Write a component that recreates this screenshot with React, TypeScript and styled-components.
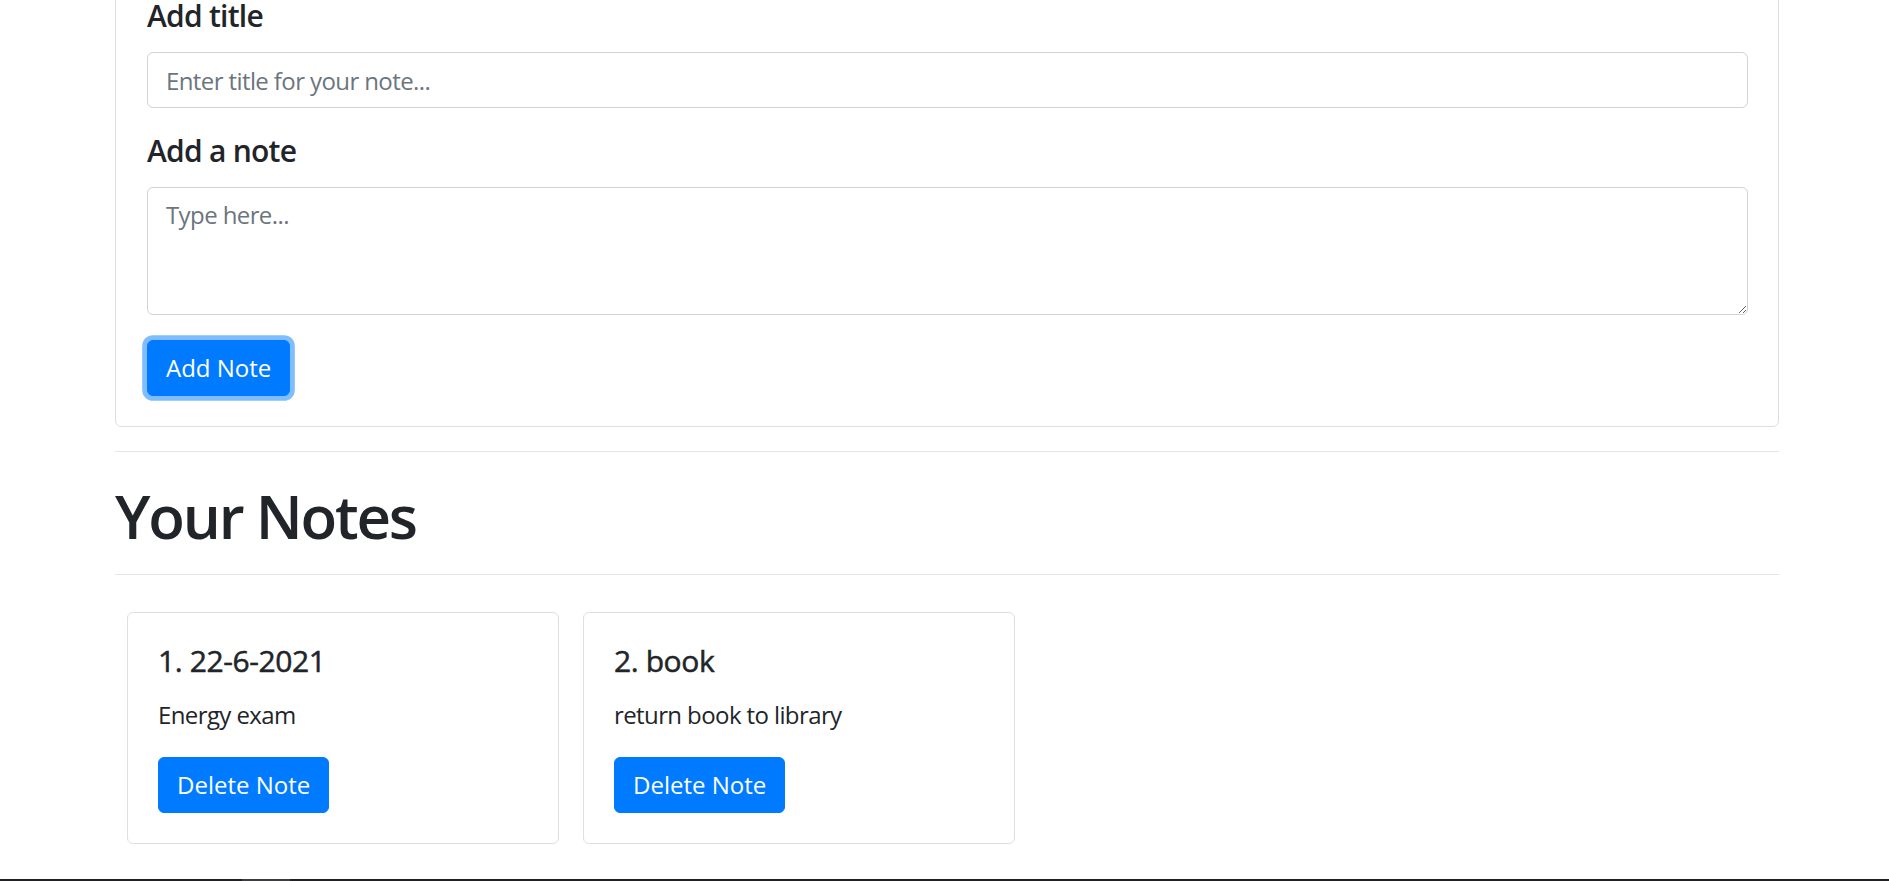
import React from "react";
import styled, { createGlobalStyle } from "styled-components";

const GlobalStyle = createGlobalStyle`
  html, body {
    margin: 0;
    padding: 0;
    background: #ffffff;
  }
  body {
    font-family: "Open Sans", "Noto Sans", "Liberation Sans", sans-serif;
    color: #212529;
    font-size: 24px;
    line-height: 1.5;
  }
  * { box-sizing: border-box; }
`;

const Screen = styled.div`
  height: 100vh;
  display: flex;
  flex-direction: column;
  overflow: hidden;
`;

const Viewport = styled.div`
  flex: 1;
  overflow: hidden;
`;

const Container = styled.div`
  width: 1664px;
  margin-left: 115px;
`;

const FormCard = styled.form`
  margin-top: -31px;
  border: 1px solid #dfdfdf;
  border-radius: 6px;
  padding: 30px 30px 30px 31px;
  display: flex;
  flex-direction: column;
  align-items: flex-start;
`;

const FormGroup = styled.div<{ $space: number }>`
  width: 100%;
  margin-bottom: ${(p) => p.$space}px;
  display: flex;
  flex-direction: column;
`;

const Label = styled.label`
  font-size: 30px;
  font-weight: 600;
  letter-spacing: -0.75px;
  line-height: 32px;
  margin-bottom: 20px;
`;

const fieldCss = `
  width: 100%;
  font-family: inherit;
  font-size: 24px;
  line-height: 36px;
  color: #495057;
  padding: 9px 18px;
  border: 1px solid #ced4da;
  border-radius: 6px;
  background: #fff;
  outline: none;
  &::placeholder { color: #6c757d; opacity: 1; letter-spacing: -0.6px; }
`;

const Input = styled.input`
  ${fieldCss}
  height: 56px;
`;

const TextArea = styled.textarea`
  ${fieldCss}
  height: 128px;
  resize: vertical;
  display: block;
`;

const Button = styled.button<{ $focused?: boolean }>`
  font-family: inherit;
  font-size: 24px;
  line-height: 36px;
  color: #fff;
  background: #007bff;
  border: 1px solid #007bff;
  border-radius: 6px;
  padding: 9px 18px;
  cursor: pointer;
  box-shadow: ${(p) => (p.$focused ? "0 0 0 4.8px rgba(0, 123, 255, 0.5)" : "none")};
`;

const Rule = styled.hr`
  border: 0;
  border-top: 1px solid rgba(0, 0, 0, 0.1);
  margin: 24px 0;
`;

const Heading = styled.h1`
  font-size: 60px;
  font-weight: 600;
  letter-spacing: -2.2px;
  line-height: 68px;
  padding-top: 6px;
  margin: 0;
`;

const NotesRow = styled.div`
  display: flex;
  flex-wrap: wrap;
`;

const NoteCard = styled.div`
  width: 432px;
  margin: 13px 12px 12px;
  border: 1px solid #dfdfdf;
  border-radius: 6px;
  padding: 30px;
`;

const NoteTitle = styled.h5`
  font-size: 30px;
  font-weight: 400;
  -webkit-text-stroke: 0.5px currentColor;
  letter-spacing: -0.4px;
  line-height: 36px;
  margin: 0 0 18px;
`;

const NoteText = styled.p`
  margin: 0 0 24px;
  font-size: 24px;
  letter-spacing: -0.6px;
  line-height: 36px;
`;

const Taskbar = styled.div`
  height: 2px;
  flex-shrink: 0;
  background: #202124;
  display: flex;
`;

const TaskbarItem = styled.div`
  width: 48px;
  margin-left: 242px;
  background: #3c3d40;
`;

const notes = [
  { title: "22-6-2021", text: "Energy exam" },
  { title: "book", text: "return book to library" },
];

export default function App() {
  return (
    <Screen>
      <GlobalStyle />
      <Viewport>
        <Container>
          <FormCard onSubmit={(e) => e.preventDefault()}>
            <FormGroup $space={27}>
              <Label htmlFor="title">Add title</Label>
              <Input id="title" type="text" placeholder="Enter title for your note..." />
            </FormGroup>
            <FormGroup $space={25}>
              <Label htmlFor="note">Add a note</Label>
              <TextArea id="note" rows={3} placeholder="Type here..." />
            </FormGroup>
            <Button type="submit" $focused>
              Add Note
            </Button>
          </FormCard>
          <Rule />
          <Heading>Your Notes</Heading>
          <Rule />
          <NotesRow>
            {notes.map((n, i) => (
              <NoteCard key={i}>
                <NoteTitle>
                  {i + 1}. {n.title}
                </NoteTitle>
                <NoteText>{n.text}</NoteText>
                <Button type="button">Delete Note</Button>
              </NoteCard>
            ))}
          </NotesRow>
        </Container>
      </Viewport>
      <Taskbar>
        <TaskbarItem />
      </Taskbar>
    </Screen>
  );
}
